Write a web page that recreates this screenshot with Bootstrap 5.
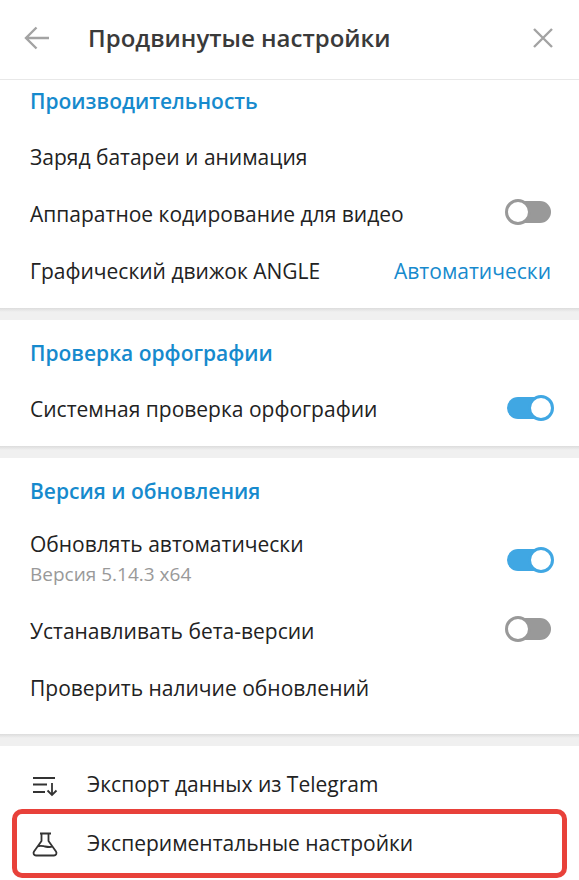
<!DOCTYPE html>
<html lang="ru">
<head>
  <meta charset="UTF-8">
  <title>Продвинутые настройки</title>
  <link rel="stylesheet" href="https://cdn.jsdelivr.net/npm/bootstrap@5.3.0/dist/css/bootstrap.min.css">
  <style>
    html, body { height: 880px; overflow: hidden; }
    body { font-family: "Open Sans", "Noto Sans", sans-serif; font-size: 21px; color: #222; background: #fff; }
    .top-bar { height: 80px; padding: 0 24px 3px; border-bottom: 1px solid #e8e8e8; }
    .top-title { margin-left: 38px; font-size: 24px; font-weight: 600; color: #3a3a3a; }
    .settings-block { padding-bottom: 8px; }
    .block-first { height: 228px; }
    .block-spell { height: 126px; }
    .block-version { height: 276px; }
    .block-title { padding: 0 30px; font-size: 21px; font-weight: 600; color: #168acd; line-height: 28px; }
    .block-first .block-title { padding-top: 7px; height: 49.5px; }
    .block-spell .block-title, .block-version .block-title { padding-top: 19px; height: 61px; }
    .block-version .block-title { height: 58px; }
    .setting-row { height: 57px; padding: 0 28px 2px 30px; line-height: 26px; }
    .setting-row.tall { height: 87px; padding-bottom: 3px; }
    .sub-text { font-size: 19px; color: #999; line-height: 24px; margin-top: 5px; }
    .value-link { color: #168acd; }
    .block-gap { height: 12px; background: linear-gradient(#dcdcdc, #f0f0f0 4px); }
    .toggle-track { width: 45px; height: 22px; position: relative; top: -2px; border-radius: 11px; background: #999; }
    .toggle-knob { position: absolute; top: -2px; width: 26px; height: 26px; border-radius: 50%; background: #fff; border: 3px solid #999; }
    .toggle-off .toggle-knob { left: -1px; }
    .toggle-on { background: #40a7e3; left: 1px; top: -1px; }
    .toggle-on .toggle-knob { right: -2px; border-color: #40a7e3; }
    .tall .toggle-track { top: 1.5px; }
    .menu-row { height: 57px; padding-left: 30px; }
    .menu-icon { width: 30px; margin-right: 27px; }
    .menu-first { margin-top: 10px; }
    .menu-second { margin-top: 2px; }
    .red-frame { position: absolute; left: 12px; top: 809px; width: 555px; height: 69px; border: 5px solid #e8413a; border-radius: 10px; pointer-events: none; }
  </style>
</head>
<body>
  <div class="top-bar d-flex align-items-center">
    <svg width="26" height="24" viewBox="0 0 26 24" fill="none" stroke="#a3a3a3" stroke-width="2.4"><path d="M25 12H2M12.500 1.500 2 12l10.500 10.500"/></svg>
    <div class="top-title">Продвинутые настройки</div>
    <svg class="ms-auto" width="22" height="22" viewBox="0 0 22 22" fill="none" stroke="#a3a3a3" stroke-width="2.4" style="margin-right:1px"><path d="M2 2l18 18M20 2 2 20"/></svg>
  </div>

  <div class="settings-block block-first">
    <div class="block-title">Производительность</div>
    <div class="setting-row d-flex align-items-center">Заряд батареи и анимация</div>
    <div class="setting-row d-flex align-items-center justify-content-between">
      <span>Аппаратное кодирование для видео</span>
      <div class="toggle-track toggle-off"><div class="toggle-knob"></div></div>
    </div>
    <div class="setting-row d-flex align-items-center justify-content-between">
      <span>Графический движок ANGLE</span>
      <span class="value-link">Автоматически</span>
    </div>
  </div>
  <div class="block-gap"></div>

  <div class="settings-block block-spell">
    <div class="block-title">Проверка орфографии</div>
    <div class="setting-row d-flex align-items-center justify-content-between">
      <span>Системная проверка орфографии</span>
      <div class="toggle-track toggle-on"><div class="toggle-knob"></div></div>
    </div>
  </div>
  <div class="block-gap"></div>

  <div class="settings-block block-version">
    <div class="block-title">Версия и обновления</div>
    <div class="setting-row tall d-flex align-items-center justify-content-between">
      <div>
        <div>Обновлять автоматически</div>
        <div class="sub-text">Версия 5.14.3 x64</div>
      </div>
      <div class="toggle-track toggle-on"><div class="toggle-knob"></div></div>
    </div>
    <div class="setting-row d-flex align-items-center justify-content-between">
      <span>Устанавливать бета-версии</span>
      <div class="toggle-track toggle-off"><div class="toggle-knob"></div></div>
    </div>
    <div class="setting-row d-flex align-items-center">Проверить наличие обновлений</div>
  </div>
  <div class="block-gap"></div>

  <div class="menu-row menu-first d-flex align-items-center">
    <svg class="menu-icon" width="30" height="24" viewBox="0 0 30 24" fill="none" stroke="#333" stroke-width="1.8"><path d="M3 5h22M3 11.500h14M3 19h12M22 10v12M17.500 17.500 22 22l4.500-4.500"/></svg>
    <span>Экспорт данных из Telegram</span>
  </div>
  <div class="menu-row menu-second d-flex align-items-center">
    <svg class="menu-icon" width="30" height="26" viewBox="0 0 30 26" fill="none" stroke="#333" stroke-width="1.8" stroke-linejoin="round"><path d="M10 2.500h11M11.500 2.500v7.500L4 20.500c-1.200 2 0 4 2 4h18c2 0 3.200-2 2-4L18.500 10V2.500M7.500 15.500c3-1.500 5-.5 7.500 0s5 1 7.500 0"/></svg>
    <span>Экспериментальные настройки</span>
  </div>
  <div class="red-frame"></div>
  <script src="https://cdn.jsdelivr.net/npm/bootstrap@5.3.0/dist/js/bootstrap.bundle.min.js"></script>
</body>
</html>
